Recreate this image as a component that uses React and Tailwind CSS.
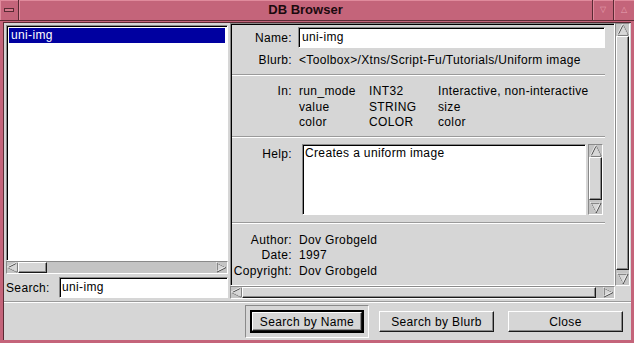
import React from 'react';

// GTK1-ish bevels, written out in full so Tailwind picks them up
const sunken = 'border border-t-[#8a8a8a] border-l-[#8a8a8a] border-b-white border-r-white';
const raised = 'border border-t-white border-l-white border-b-[#1a1a1a] border-r-[#1a1a1a] shadow-[inset_-1px_-1px_0_#8a8a8a]';

function Arrow({ dir, size = 11 }) {
  const s = size;
  const pts = {
    left: `1,${s / 2} ${s - 1},1 ${s - 1},${s - 1}`,
    right: `${s - 1},${s / 2} 1,1 1,${s - 1}`,
    up: `${s / 2},1 ${s - 1},${s - 1} 1,${s - 1}`,
    down: `${s / 2},${s - 1} 1,1 ${s - 1},1`,
  }[dir];
  return (
    <svg width={s} height={s} viewBox={`0 0 ${s} ${s}`} className="shrink-0">
      <polygon points={pts} fill="#d6d6d6" stroke="#3a3a3a" strokeWidth="1" />
      <polygon points={pts} fill="none" stroke="#ffffff" strokeWidth="1" transform="translate(-0.6,-0.6)" opacity="0.7" />
    </svg>
  );
}

function HScroll({ thumbLeft, thumbWidth }) {
  return (
    <div className={`flex items-center h-[13px] bg-[#c4c4c4] ${sunken}`}>
      <Arrow dir="left" />
      <div className="flex-1 h-full relative">
        <div className={`absolute top-0 bottom-0 bg-[#d6d6d6] ${raised}`} style={{ left: thumbLeft, width: thumbWidth }} />
      </div>
      <Arrow dir="right" />
    </div>
  );
}

function VScroll({ thumbTop, thumbHeight, className }) {
  return (
    <div className={`flex flex-col items-center w-[15px] bg-[#c4c4c4] ${sunken} ${className}`}>
      <Arrow dir="up" size={12} />
      <div className="flex-1 w-full relative">
        <div className={`absolute left-0 right-0 bg-[#d6d6d6] ${raised}`} style={{ top: thumbTop, height: thumbHeight }} />
      </div>
      <Arrow dir="down" size={12} />
    </div>
  );
}

function Separator() {
  return <div className="h-[2px] border-t border-t-[#9a9a9a] border-b border-b-white" />;
}

const params = [
  ['run_mode', 'INT32', 'Interactive, non-interactive'],
  ['value', 'STRING', 'size'],
  ['color', 'COLOR', 'color'],
];

const credits = [
  ['Author:', 'Dov Grobgeld'],
  ['Date:', '1997'],
  ['Copyright:', 'Dov Grobgeld'],
];

export default function App() {
  return (
    <div className="w-[634px] h-[343px] flex flex-col bg-[#c4647a] font-['Liberation_Sans',Arial,sans-serif] text-[12px] tracking-[0.35px] text-black overflow-hidden">
      {/* title bar */}
      <div className="h-[21px] flex border-b border-b-[#5a2a34]">
        <div className="w-[19px] flex items-center justify-center border-r border-r-[#5a2a34] shadow-[inset_1px_1px_0_#e08a9c]">
          <div className="w-[10px] h-[4px] border border-[#5a2a34] bg-[#d47a8c]" />
        </div>
        <div className="flex-1 text-center font-bold text-[13px] tracking-normal leading-[20px] text-[#1a0a0e] shadow-[inset_1px_1px_0_#e08a9c]">
          DB Browser
        </div>
        <div className="w-[21px] flex items-center justify-center border-l border-l-[#5a2a34] shadow-[inset_1px_1px_0_#e08a9c] text-[#e6a0b0] text-[8px]">
          ▽
        </div>
        <div className="w-[21px] flex items-center justify-center border-l border-l-[#5a2a34] shadow-[inset_1px_1px_0_#e08a9c] text-[#e6a0b0] text-[8px]">
          △
        </div>
      </div>

      {/* window body */}
      <div className="flex-1 flex pl-[3px] pr-[3px] pb-[3px] pt-[1px]">
        <div className="flex-1 flex flex-col bg-[#d6d6d6] border-l border-t border-l-[#5a2a34] border-t-[#5a2a34]">
          <div className="h-[277px] flex">
            {/* left column */}
            <div className="w-[224px] pl-[2px] pt-[2px] flex flex-col">
              <div className={`h-[236px] bg-white ${sunken} shadow-[inset_1px_1px_0_#000] p-[2px]`}>
                <div className="h-[15px] bg-[#0000a0] text-white leading-[15px] pl-[2px]">uni-img</div>
              </div>
              <HScroll thumbLeft={0} thumbWidth={29} />
              <div className="flex items-center mt-[2px] h-[23px]">
                <span className="w-[53px]">Search:</span>
                <div className={`flex-1 h-[21px] bg-white ${sunken} shadow-[inset_1px_1px_0_#000] pl-[2px] leading-[19px]`}>
                  uni-img
                </div>
              </div>
            </div>

            {/* right column */}
            <div className="ml-[2px] w-[400px] flex flex-col">
              <div className="h-[263px] flex">
                <div className={`w-[385px] ${sunken} shadow-[inset_1px_1px_0_#000] flex flex-col pl-[1px] pr-[9px] pt-[3px]`}>
                  <div className="flex items-center h-[21px]">
                    <span className="w-[60px] text-right">Name:</span>
                    <div className={`ml-[6px] flex-1 h-[21px] bg-white ${sunken} shadow-[inset_1px_1px_0_#000] pl-[3px] leading-[19px]`}>
                      uni-img
                    </div>
                  </div>
                  <div className="flex h-[15px] mt-[5px] leading-[15px]">
                    <span className="w-[60px] text-right">Blurb:</span>
                    <span className="ml-[7px] whitespace-nowrap">&lt;Toolbox&gt;/Xtns/Script-Fu/Tutorials/Uniform image</span>
                  </div>
                  <div className="mt-[6px]"><Separator /></div>
                  <div className="flex mt-[8px] leading-[15.5px]">
                    <span className="w-[60px] text-right">In:</span>
                    <div className="ml-[7px] flex flex-col">
                      {params.map(p => (
                        <div key={p[0]} className="flex whitespace-nowrap">
                          <span className="w-[70px]">{p[0]}</span>
                          <span className="w-[69px]">{p[1]}</span>
                          <span>{p[2]}</span>
                        </div>
                      ))}
                    </div>
                  </div>
                  <div className="mt-[5px]"><Separator /></div>
                  <div className="flex mt-[6px]">
                    <span className="w-[60px] text-right pt-[1px]">Help:</span>
                    <div className={`ml-[10px] w-[284px] h-[71px] bg-white ${sunken} shadow-[inset_1px_1px_0_#000] pl-[2px] pt-[1px] leading-[15px]`}>
                      Creates a uniform image
                    </div>
                    <VScroll thumbTop={0} thumbHeight={43} className="ml-[2px] h-[71px]" />
                  </div>
                  <div className="mt-[7px]"><Separator /></div>
                  <div className="flex flex-col mt-[9px] leading-[15.5px]">
                    {credits.map(c => (
                      <div key={c[0]} className="flex">
                        <span className="w-[60px] text-right">{c[0]}</span>
                        <span className="ml-[7px]">{c[1]}</span>
                      </div>
                    ))}
                  </div>
                </div>
                <VScroll thumbTop={0} thumbHeight={234} className="h-[263px]" />
              </div>
              <div className="w-[385px]">
                <HScroll thumbLeft={0} thumbWidth={354} />
              </div>
            </div>
          </div>

          <div className="mt-[1px]"><Separator /></div>

          {/* buttons */}
          <div className="flex items-center pl-[241px] pt-[2px]">
            <div className={`w-[124px] h-[33px] flex items-center justify-center ${sunken}`}>
              <div className="w-[114px] h-[23px] border-2 border-black flex">
                <div className={`flex-1 bg-[#d6d6d6] ${raised} flex items-center justify-center`}>Search by Name</div>
              </div>
            </div>
            <div className={`ml-[10px] w-[115px] h-[21px] bg-[#d6d6d6] ${raised} flex items-center justify-center`}>Search by Blurb</div>
            <div className={`ml-[14px] w-[115px] h-[21px] bg-[#d6d6d6] ${raised} flex items-center justify-center`}>Close</div>
          </div>
        </div>
      </div>
    </div>
  );
}
